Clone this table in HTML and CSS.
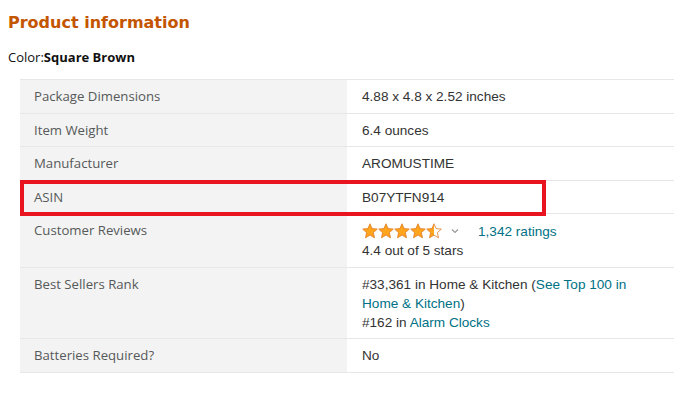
FILE: index.html
```html
<!DOCTYPE html>
<html>
<head>
<meta charset="utf-8">
<link rel="stylesheet" href="styles.css">
</head>
<body>
<h2 class="title">Product information</h2>
<div class="color-line">Color:<b>Square Brown</b></div>
<table class="info">
  <tr><th>Package Dimensions</th><td>4.88 x 4.8 x 2.52 inches</td></tr>
  <tr><th>Item Weight</th><td>6.4 ounces</td></tr>
  <tr><th>Manufacturer</th><td>AROMUSTIME</td></tr>
  <tr><th class="marked">ASIN<span class="highlight"></span></th><td>B07YTFN914</td></tr>
  <tr><th>Customer Reviews</th><td>
    <div class="rating">
      <svg class="stars" width="80" height="16" viewBox="0 0 80 16">
        <defs>
          <linearGradient id="half" x1="0" x2="1" y1="0" y2="0">
            <stop offset="0.5" stop-color="#ffa41c"/><stop offset="0.5" stop-color="#fff"/>
          </linearGradient>
          <path id="st" d="M8 0.8 L10.1 5.6 L15.3 6.1 L11.4 9.6 L12.5 14.8 L8 12.1 L3.5 14.8 L4.6 9.6 L0.7 6.1 L5.9 5.6 Z"/>
        </defs>
        <use href="#st" x="0" fill="#ffa41c" stroke="#de7921" stroke-width="0.8"/>
        <use href="#st" x="16" fill="#ffa41c" stroke="#de7921" stroke-width="0.8"/>
        <use href="#st" x="32" fill="#ffa41c" stroke="#de7921" stroke-width="0.8"/>
        <use href="#st" x="48" fill="#ffa41c" stroke="#de7921" stroke-width="0.8"/>
        <use href="#st" x="64" fill="url(#half)" stroke="#de7921" stroke-width="0.8"/>
      </svg>
      <svg class="chev" width="8" height="6" viewBox="0 0 8 6"><path d="M1 1.5 L4 4.5 L7 1.5" fill="none" stroke="#999" stroke-width="1.2"/></svg>
      <a class="link ratings">1,342 ratings</a>
    </div>
    <div>4.4 out of 5 stars</div>
  </td></tr>
  <tr><th>Best Sellers Rank</th><td>#33,361 in Home &amp; Kitchen (<a class="link">See Top 100 in Home &amp; Kitchen</a>)<br>#162 in <a class="link">Alarm Clocks</a></td></tr>
  <tr><th>Batteries Required?</th><td>No</td></tr>
</table>
</body>
</html>
```
FILE: styles.css
```css
body {
  margin: 8px;
  background: #fff;
  font-family: "Open Sans", "Liberation Sans", sans-serif;
  color: #111;
}
.title {
  margin: 3px 0 0;
  font-family: "DejaVu Sans", sans-serif;
  font-size: 16px;
  font-weight: bold;
  line-height: 24px;
  color: #c45500;
}
.color-line {
  margin-top: 12px;
  font-size: 13px;
  line-height: 20px;
  color: #111;
}
.color-line b { font-weight: 700; }
.info {
  margin: 12px 0 0 12px;
  width: 654px;
  border-collapse: collapse;
  border-top: 1px solid #e7e7e7;
}
.info tr { border-bottom: 1px solid #e7e7e7; }
.info th {
  width: 313px;
  background: #f3f3f3;
  text-align: left;
  font-weight: normal;
  font-family: "Open Sans", sans-serif;
  font-size: 13.2px;
  color: #565959;
  padding: 7px 0 6.5px 14px;
  line-height: 19px;
  vertical-align: top;
}
.info td {
  font-family: "Liberation Sans", Arial, sans-serif;
  font-size: 13.6px;
  color: #333;
  padding: 7px 15px 6.5px 15px;
  line-height: 19px;
  vertical-align: top;
}
.marked { position: relative; }
.highlight {
  position: absolute;
  left: 0;
  top: -1px;
  width: 526px;
  height: 36px;
  box-sizing: border-box;
  border: 4px solid #e8141f;
}
.rating {
  display: flex;
  align-items: center;
  height: 20px;
}
.stars { display: block; }
.chev { margin-left: 9px; margin-right: 19px; }
.link { color: #007185; }
```
